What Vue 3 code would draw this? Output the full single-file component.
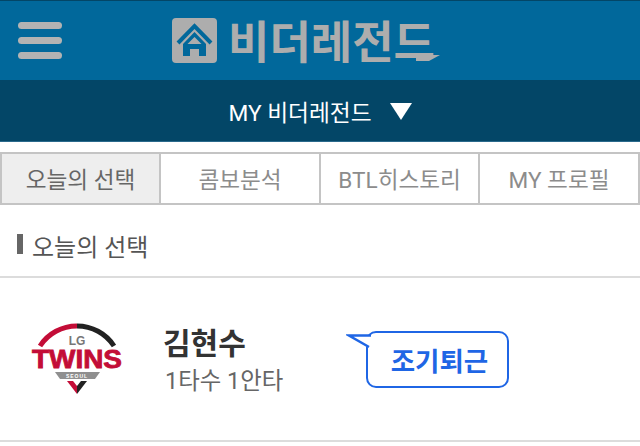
<script setup>
const tabs = [
  { label: '오늘의 선택', active: true },
  { label: '콤보분석', active: false },
  { label: 'BTL히스토리', active: false },
  { label: 'MY 프로필', active: false },
]
</script>

<template>
  <div class="page">
    <header class="top">
      <div class="burger"><i></i><i></i><i></i></div>
      <div class="brand">
        <svg class="home" width="45" height="45" viewBox="0 0 45 45">
          <rect width="45" height="45" rx="4" fill="#adadad" />
          <path d="M6 25 L22.5 8 L39 25" fill="none" stroke="#01689b" stroke-width="4" />
          <path d="M22.5 14 L34 26 V38 H27 V31 H18 V38 H11 V26 Z" fill="#01689b" />
          <path d="M22.5 19 L29.5 26 H15.5 Z" fill="#adadad" />
        </svg>
        <div class="word">
          <span>비더레전드</span>
          <svg class="tail" width="24" height="7" viewBox="0 0 24 7"><path d="M0 0 H24 L13 6 H0 Z" fill="#adadad" /></svg>
        </div>
      </div>
    </header>
    <div class="sub">
      <span>MY 비더레전드</span>
      <svg width="22" height="17" viewBox="0 0 22 17"><path d="M0 0 H22 L11 17 Z" fill="#fff" /></svg>
    </div>
    <nav class="tabs">
      <div v-for="t in tabs" :key="t.label" class="tab" :class="{ on: t.active }">{{ t.label }}</div>
    </nav>
    <h2 class="title"><b></b><span>오늘의 선택</span></h2>
    <section class="row">
      <svg class="logo" width="100" height="76" viewBox="0 0 100 76">
        <path d="M13 24 A44 44 0 0 1 50 4" fill="none" stroke="#c30d37" stroke-width="5" />
        <path d="M50 4 A44 44 0 0 1 87 24" fill="none" stroke="#222" stroke-width="5" />
        <text x="50" y="23" class="lg">LG</text>
        <text x="50" y="46" class="twins" textLength="90" lengthAdjust="spacingAndGlyphs">TWINS</text>
        <path d="M28 50 H73 L68 57 H33 Z" fill="#8f8f8f" />
        <text x="50" y="56" class="seoul">SEOUL</text>
        <path d="M40 59 H46 L50 64 V72 Z" fill="#c30d37" />
        <path d="M60 59 H54 L50 64 V72 Z" fill="#222" />
      </svg>
      <div class="info">
        <strong>김현수</strong>
        <span>1타수 1안타</span>
      </div>
      <div class="bubble">
        <svg class="beak" width="25" height="16" viewBox="0 0 25 16">
          <path d="M1 1.5 H25 V15 Z" fill="#fff" />
          <path d="M25 1.5 H3 L23 13" fill="none" stroke="#1f66e5" stroke-width="2.5" />
        </svg>
        <span>조기퇴근</span>
      </div>
    </section>
  </div>
</template>

<style>
html, body { margin: 0; background: #fff; }
</style>

<style scoped>
.page {
  width: 640px;
  height: 446px;
  overflow: hidden;
  background: #fff;
  font-family: Roboto, "Noto Sans CJK KR", sans-serif;
}
.top {
  height: 80px;
  box-sizing: border-box;
  border-top: 1px solid #034667;
  background: #01689b;
  display: flex;
  align-items: flex-start;
  padding: 17px 0 0 18px;
}
.burger {
  width: 44px;
  display: flex;
  flex-direction: column;
  gap: 8px;
  padding-top: 4px;
}
.burger i {
  display: block;
  height: 7px;
  border-radius: 4px;
  background: #b3b3b3;
}
.brand {
  display: flex;
  margin-left: 110px;
}
.home { flex: none; }
.word {
  position: relative;
  margin-left: 11px;
  width: 212px;
  height: 46px;
  color: #adadad;
  font-family: "Noto Sans CJK KR", sans-serif;
  font-size: 45px;
  font-weight: 700;
  line-height: 43px;
  white-space: nowrap;
}
.tail { position: absolute; left: 188px; top: 37px; }
.sub {
  height: 62px;
  background: #034667;
  color: #fff;
  font-size: 22.7px;
  display: flex;
  align-items: center;
  justify-content: center;
  gap: 18px;
  box-shadow: inset 0 -1px 0 #2a6a8c;
}
.tabs {
  margin-top: 10px;
  height: 53px;
  box-sizing: border-box;
  border: 2px solid #c4c4c4;
  display: grid;
  grid-template-columns: 157px 160px 159px 1fr;
}
.tab {
  display: flex;
  align-items: center;
  justify-content: center;
  border-left: 2px solid #c4c4c4;
  color: #8c8c8c;
  font-size: 22.6px;
  white-space: nowrap;
}
.tab:first-child { border-left: 0; }
.tab.on { background: #eee; color: #666; }
.title {
  margin: 0;
  height: 73px;
  box-sizing: border-box;
  border-bottom: 2px solid #dcdcdc;
  display: flex;
  align-items: center;
  padding-left: 17px;
  color: #555;
  font-size: 24px;
  font-weight: 400;
}
.title span { padding-top: 9px; }
.title b {
  width: 6px;
  height: 20px;
  margin: 6px 9px 0 0;
  background: #666;
}
.row {
  height: 164px;
  box-sizing: border-box;
  border-bottom: 2px solid #dcdcdc;
  display: flex;
  align-items: flex-start;
}
.logo { margin: 44px 0 0 27px; flex: none; }
.lg { font: 700 12px "Liberation Sans", sans-serif; fill: #777; text-anchor: middle; }
.twins { font: 700 25px "Liberation Sans", sans-serif; fill: #c30d37; stroke: #c30d37; stroke-width: 0.8; text-anchor: middle; }
.seoul { font: 700 5px "Liberation Sans", sans-serif; fill: #fff; text-anchor: middle; letter-spacing: 1px; }
.info {
  margin: 46px 0 0 36px;
  width: 203px;
  display: flex;
  flex-direction: column;
}
.info strong {
  color: #333;
  font-size: 30px;
  line-height: 40px;
  font-weight: 700;
}
.info span {
  color: #666;
  font-size: 23.4px;
  line-height: 35px;
  padding-left: 2px;
}
.bubble {
  position: relative;
  margin-top: 53px;
  width: 143px;
  height: 57px;
  box-sizing: border-box;
  border: 2.5px solid #1f66e5;
  border-radius: 10px;
  background: #fff;
  color: #1f66e5;
  font-size: 26.5px;
  font-weight: 700;
  display: flex;
  align-items: center;
  justify-content: center;
  padding-left: 4px;
}
.beak { position: absolute; left: -22px; top: 1px; }
</style>
